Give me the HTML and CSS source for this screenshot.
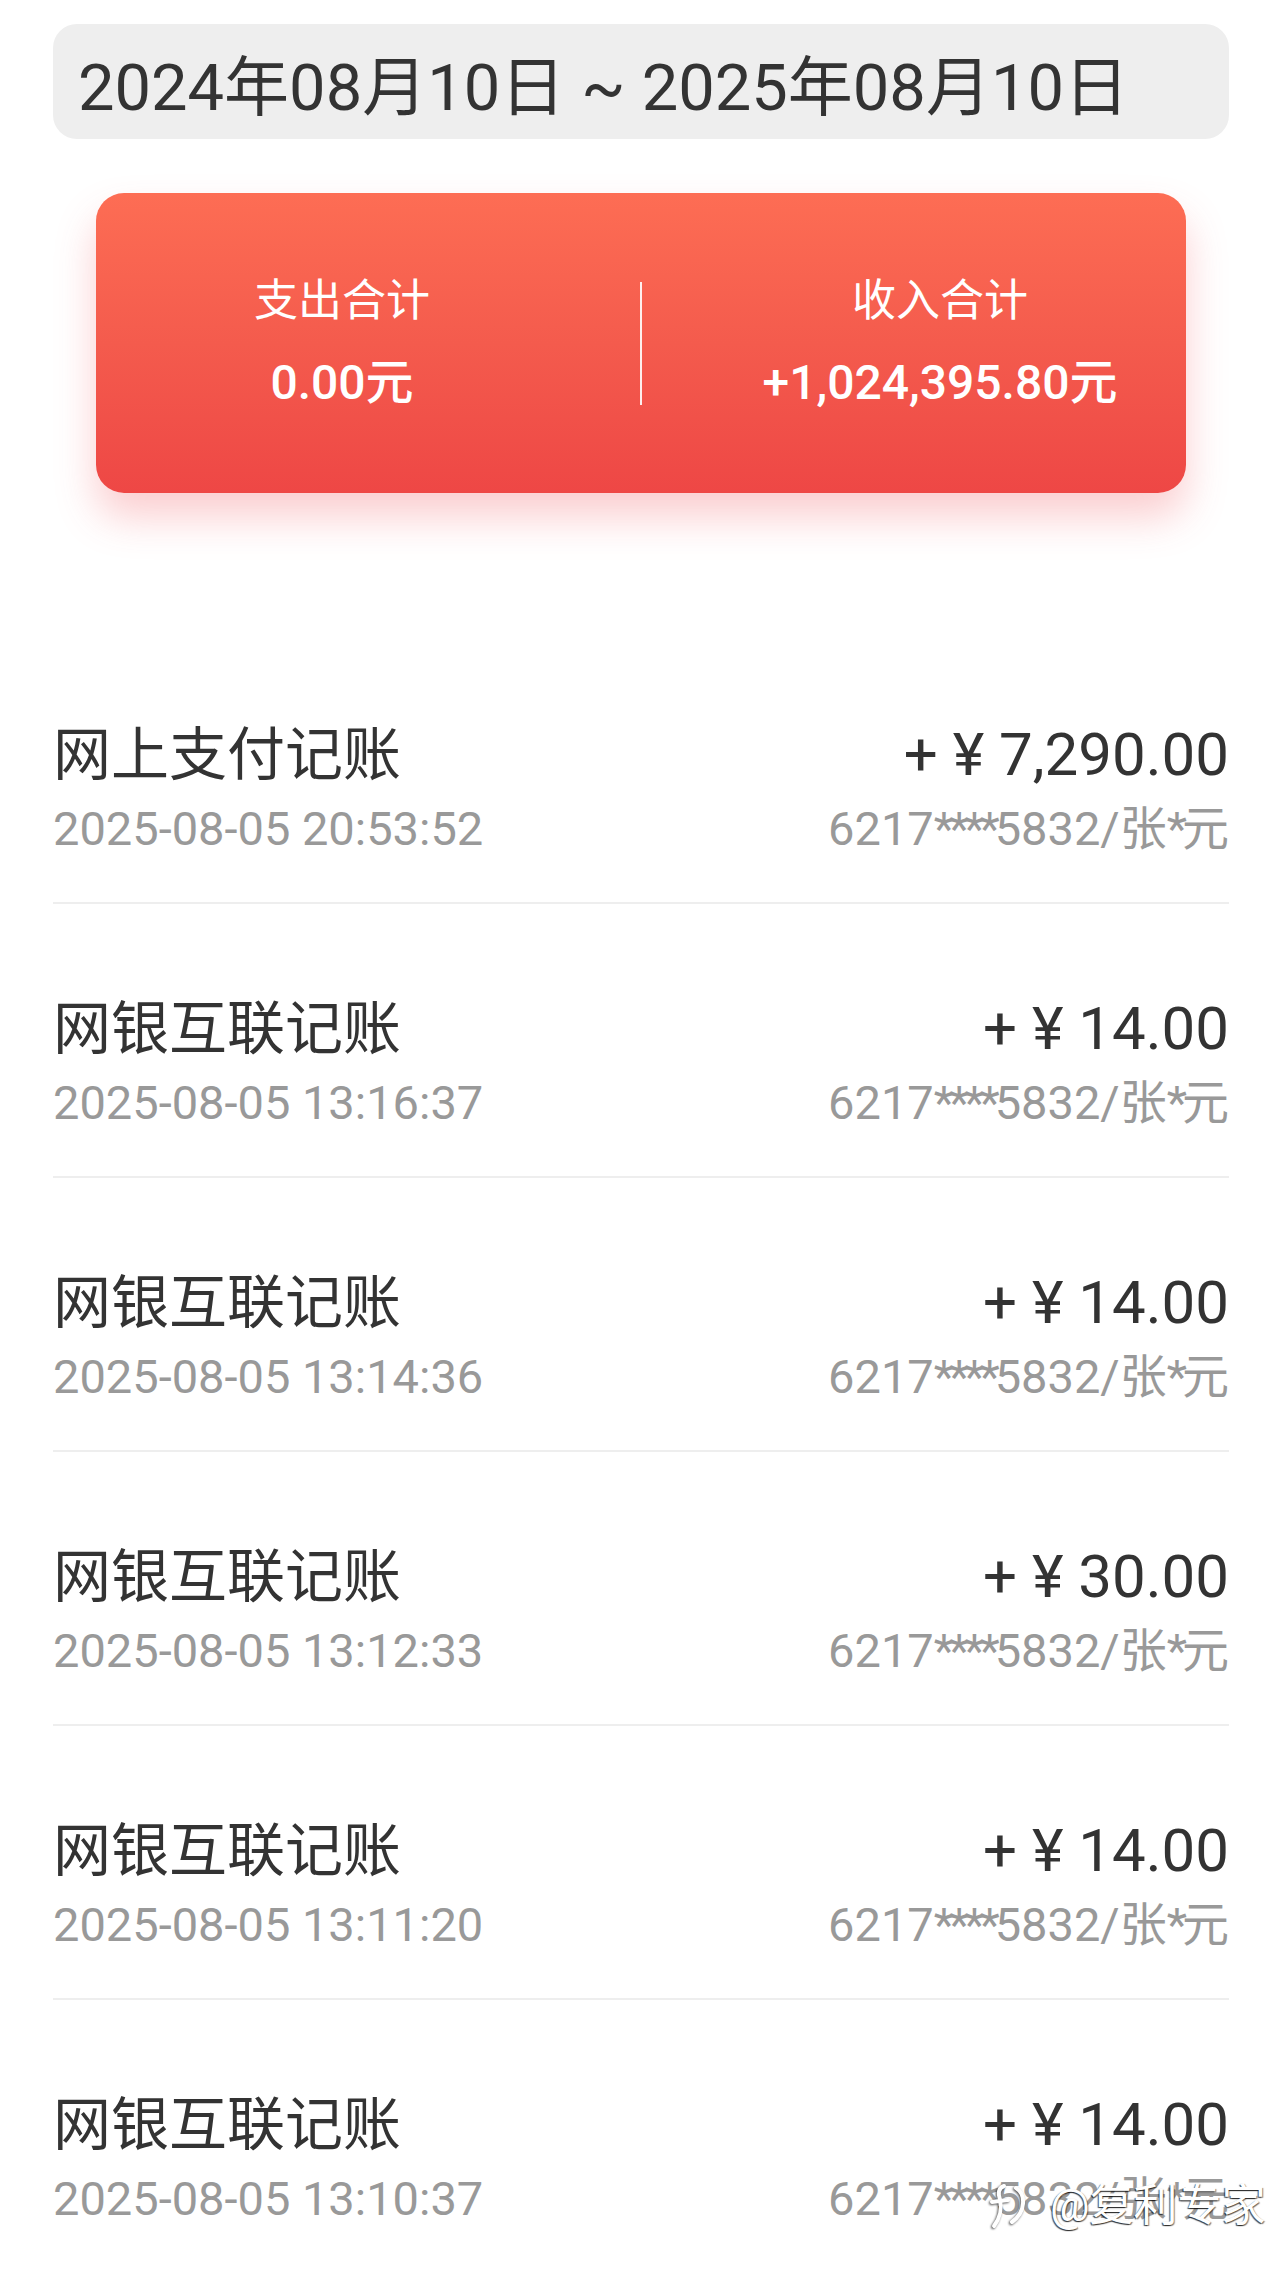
FILE: index.html
```html
<!DOCTYPE html>
<html lang="zh-CN">
<head>
  <meta charset="UTF-8">
  <meta name="viewport" content="width=device-width, initial-scale=1.0">
  <title>交易明细</title>
  <link rel="stylesheet" href="styles.css">
</head>
<body>
  <div class="page">
    <!-- Date range -->
    <div class="range">2024年08月10日 ~ 2025年08月10日</div>

    <!-- Totals card -->
    <div class="summary">
      <div class="summary-col">
        <div class="summary-label">支出合计</div>
        <div class="summary-value">0.00元</div>
      </div>
      <div class="summary-divider"></div>
      <div class="summary-col">
        <div class="summary-label">收入合计</div>
        <div class="summary-value">+1,024,395.80元</div>
      </div>
    </div>

    <!-- Records -->
    <ul class="records">
      <li class="record">
        <div class="record-line">
          <span class="record-title">网上支付记账</span>
          <span class="record-amount">+ ¥ 7,290.00</span>
        </div>
        <div class="record-line record-sub">
          <span>2025-08-05 20:53:52</span>
          <span>6217<span class="mask">****</span>5832/张<span class="mask">*</span>元</span>
        </div>
      </li>
      <li class="record">
        <div class="record-line">
          <span class="record-title">网银互联记账</span>
          <span class="record-amount">+ ¥ 14.00</span>
        </div>
        <div class="record-line record-sub">
          <span>2025-08-05 13:16:37</span>
          <span>6217<span class="mask">****</span>5832/张<span class="mask">*</span>元</span>
        </div>
      </li>
      <li class="record">
        <div class="record-line">
          <span class="record-title">网银互联记账</span>
          <span class="record-amount">+ ¥ 14.00</span>
        </div>
        <div class="record-line record-sub">
          <span>2025-08-05 13:14:36</span>
          <span>6217<span class="mask">****</span>5832/张<span class="mask">*</span>元</span>
        </div>
      </li>
      <li class="record">
        <div class="record-line">
          <span class="record-title">网银互联记账</span>
          <span class="record-amount">+ ¥ 30.00</span>
        </div>
        <div class="record-line record-sub">
          <span>2025-08-05 13:12:33</span>
          <span>6217<span class="mask">****</span>5832/张<span class="mask">*</span>元</span>
        </div>
      </li>
      <li class="record">
        <div class="record-line">
          <span class="record-title">网银互联记账</span>
          <span class="record-amount">+ ¥ 14.00</span>
        </div>
        <div class="record-line record-sub">
          <span>2025-08-05 13:11:20</span>
          <span>6217<span class="mask">****</span>5832/张<span class="mask">*</span>元</span>
        </div>
      </li>
      <li class="record">
        <div class="record-line">
          <span class="record-title">网银互联记账</span>
          <span class="record-amount">+ ¥ 14.00</span>
        </div>
        <div class="record-line record-sub">
          <span>2025-08-05 13:10:37</span>
          <span>6217<span class="mask">****</span>5832/张<span class="mask">*</span>元</span>
        </div>
      </li>
    </ul>
  </div>

  <!-- Watermark -->
  <div class="watermark">
    <svg class="watermark-logo" width="40" height="52" viewBox="0 0 40 52">
      <path d="M14 6 C8 8 8 14 10 20 C12 28 10 38 4 46" fill="none" stroke="#fff" stroke-width="4" stroke-linecap="round"/>
      <path d="M2 22 L18 20" fill="none" stroke="#fff" stroke-width="4" stroke-linecap="round"/>
      <path d="M26 8 C36 14 36 32 22 42" fill="none" stroke="#fff" stroke-width="4" stroke-linecap="round"/>
    </svg>
    <span>@复利专家</span>
  </div>
</body>
</html>
```

FILE: styles.css
```css
body {
  margin: 0;
  background-color: #fff;
  font-family: Roboto, "Noto Sans CJK SC", sans-serif;
  color: #333;
  overflow: hidden;
}

.page {
  padding: 24px 51px 0 53px;
}

.range {
  display: flex;
  align-items: center;
  height: 115px;
  padding-left: 25px;
  background-color: #eeeeee;
  border-radius: 24px;
  font-size: 65px;
  color: #333;
}

.summary {
  display: flex;
  align-items: center;
  justify-content: center;
  gap: 88px;
  height: 300px;
  margin: 54px 43px 0;
  border-radius: 28px;
  background: linear-gradient(180deg, #fd6d54 0%, #f45b4d 50%, #ee4745 100%);
  box-shadow: 0 24px 40px rgba(240, 80, 85, 0.28);
  color: #fff;
}

.summary-col {
  width: 420px;
  text-align: center;
}

.summary-label {
  font-size: 44px;
  line-height: 52px;
}

.summary-value {
  margin-top: 28px;
  font-size: 48px;
  line-height: 56px;
  font-weight: 500;
}

.summary-divider {
  width: 2px;
  height: 123px;
  background-color: rgba(255, 255, 255, 0.9);
}

.records {
  list-style: none;
  margin: 137px 0 0;
  padding: 0;
}

.record {
  padding: 96px 0 51px;
  border-bottom: 2px solid #eeeeee;
}

.record:last-child {
  border-bottom: none;
}

.record-line {
  display: flex;
  justify-content: space-between;
  align-items: baseline;
  height: 57px;
}

.record-title {
  font-size: 58px;
  line-height: 57px;
  color: #333;
}

.record-amount {
  font-size: 60px;
  line-height: 57px;
  color: #333;
}

.record-sub {
  margin-top: 23px;
  height: 45px;
  font-size: 47px;
  line-height: 45px;
  color: #999;
}

.mask {
  letter-spacing: -5px;
}

.watermark {
  position: absolute;
  left: 990px;
  top: 2180px;
  display: flex;
  align-items: center;
  gap: 20px;
  font-size: 44px;
  line-height: 52px;
  color: #fff;
  text-shadow: -1px 1px 1px rgba(0, 0, 0, 0.7), 1px 1px 1px rgba(0, 0, 0, 0.5);
}

.watermark-logo {
  filter: drop-shadow(-1px 1px 1px rgba(0, 0, 0, 0.7));
}
```
